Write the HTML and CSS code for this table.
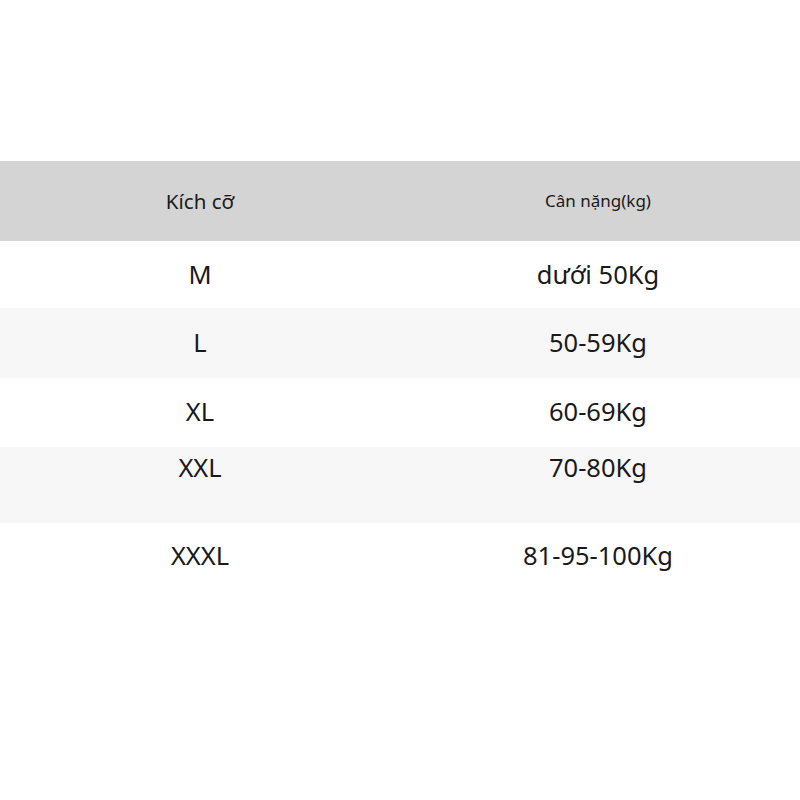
FILE: index.html
```html
<!DOCTYPE html>
<html lang="vi">
<head>
<meta charset="utf-8">
<link rel="stylesheet" href="styles.css">
</head>
<body>
<div class="page">
  <div class="table">
    <div class="row head">
      <div class="cell">Kích cỡ</div>
      <div class="cell small">Cân nặng(kg)</div>
    </div>
    <div class="row r1">
      <div class="cell">M</div>
      <div class="cell">dưới 50Kg</div>
    </div>
    <div class="row r2 alt">
      <div class="cell">L</div>
      <div class="cell">50-59Kg</div>
    </div>
    <div class="row r3">
      <div class="cell">XL</div>
      <div class="cell">60-69Kg</div>
    </div>
    <div class="row r4 alt">
      <div class="cell">XXL</div>
      <div class="cell">70-80Kg</div>
    </div>
    <div class="row r5">
      <div class="cell">XXXL</div>
      <div class="cell">81-95-100Kg</div>
    </div>
  </div>
</div>
</body>
</html>
```

FILE: styles.css
```css
html, body {
  margin: 0;
  padding: 0;
  background: #ffffff;
}
.page {
  width: 800px;
  height: 800px;
  padding-top: 161px;
  box-sizing: border-box;
  font-family: "Noto Sans", "Open Sans", sans-serif;
  color: #1a1a1a;
}
.table {
  display: flex;
  flex-direction: column;
}
.row {
  display: grid;
  grid-template-columns: 400px 396px;
  align-items: center;
  font-size: 25.5px;
  line-height: 32px;
  box-sizing: border-box;
}
.cell {
  text-align: center;
}
.head {
  height: 80px;
  background: #d4d4d4;
  font-size: 20.5px;
}
.head .small {
  font-size: 17px;
}
.alt {
  background: #f7f7f7;
}
.r1 { height: 67px; padding-bottom: 2px; }
.r2 { height: 70px; padding-bottom: 2px; }
.r3 { height: 69px; padding-bottom: 4px; }
.r4 {
  height: 76px;
  align-items: start;
  padding-top: 4px;
}
.r5 {
  height: 64px;
}
```
